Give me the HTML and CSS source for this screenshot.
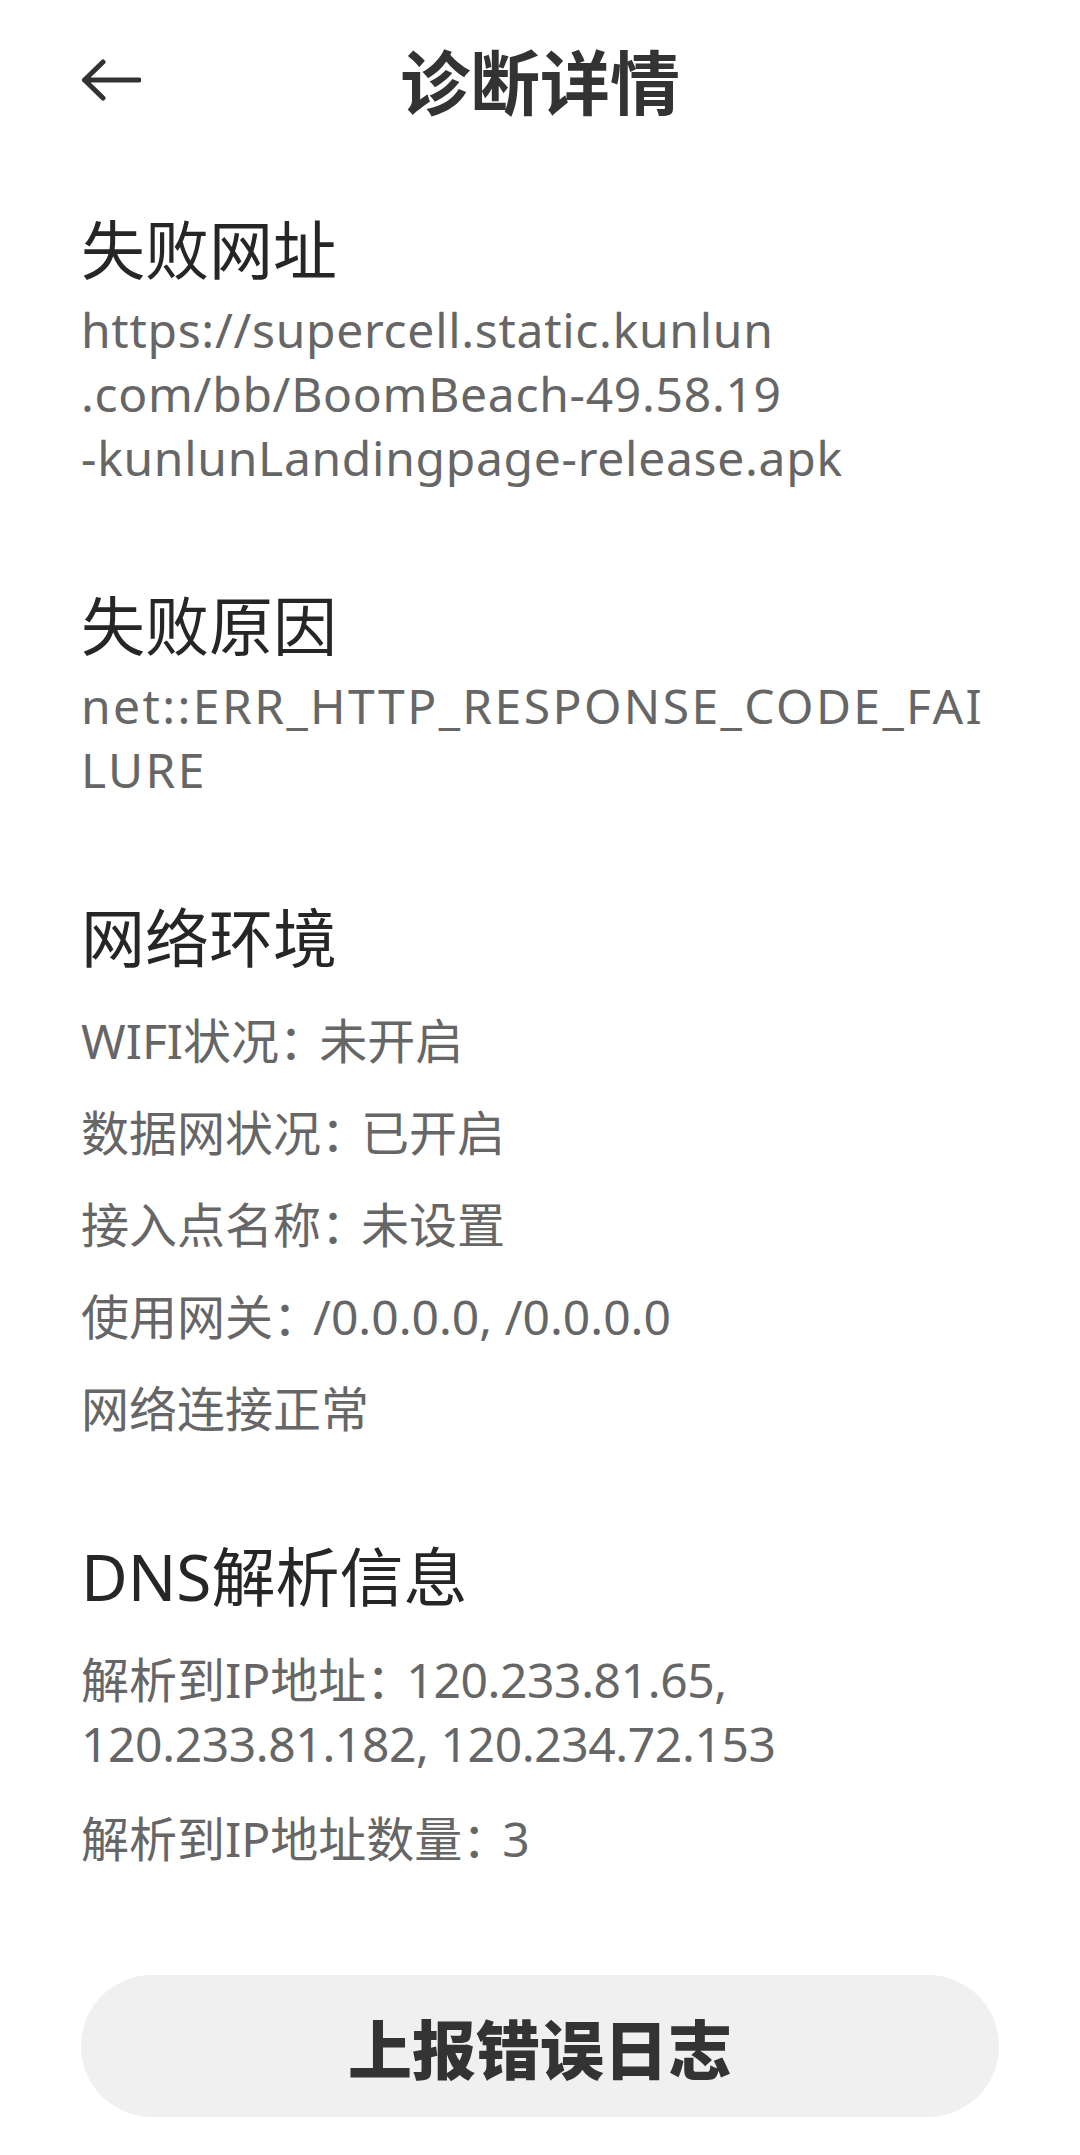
FILE: index.html
```html
<!DOCTYPE html>
<html lang="zh-CN">
<head>
<meta charset="utf-8">
<title>诊断详情</title>
<link rel="stylesheet" href="styles.css">
</head>
<body>
<div class="page">
  <header class="topbar">
    <button class="back" aria-label="返回">
      <svg class="back-icon" viewBox="0 0 60 44" width="60" height="44">
        <path d="M3.5 22 H58 M22 4 L3.5 22 L22 40" fill="none" stroke="#333" stroke-width="5" stroke-linecap="round" stroke-linejoin="round"/>
      </svg>
    </button>
    <h1 class="title">诊断详情</h1>
    <span class="spacer"></span>
  </header>

  <main class="content">
    <section class="section">
      <h2 class="heading">失败网址</h2>
      <p class="text url">
        <span class="line">https://supercell.static.kunlun</span>
        <span class="line">.com/bb/BoomBeach-49.58.19</span>
        <span class="line">-kunlunLandingpage-release.apk</span>
      </p>
    </section>

    <section class="section">
      <h2 class="heading">失败原因</h2>
      <p class="text caps">
        <span class="line">net::ERR_HTTP_RESPONSE_CODE_FAI</span>
        <span class="line">LURE</span>
      </p>
    </section>

    <section class="section">
      <h2 class="heading">网络环境</h2>
      <ul class="items">
        <li class="item">WIFI状况<span class="sep">：</span>未开启</li>
        <li class="item">数据网状况<span class="sep">：</span>已开启</li>
        <li class="item">接入点名称<span class="sep">：</span>未设置</li>
        <li class="item">使用网关<span class="sep">：</span>/0.0.0.0, /0.0.0.0</li>
        <li class="item">网络连接正常</li>
      </ul>
    </section>

    <section class="section">
      <h2 class="heading">DNS解析信息</h2>
      <ul class="items">
        <li class="item">
          <span class="line">解析到IP地址<span class="sep">：</span><span class="num">120.233.81.65,</span></span>
          <span class="line num">120.233.81.182, 120.234.72.153</span>
        </li>
        <li class="item item-count">解析到IP地址数量<span class="sep">：</span>3</li>
      </ul>
    </section>
  </main>

  <div class="actions">
    <button class="report">上报错误日志</button>
  </div>
</div>
</body>
</html>
```

FILE: styles.css
```css
* {
  box-sizing: border-box;
}

html, body {
  margin: 0;
  padding: 0;
  background: #ffffff;
}

body {
  font-family: "Noto Sans", "Noto Sans CJK SC", sans-serif;
  color: #333333;
}

.page {
  padding: 0 81px;
}

.topbar {
  display: grid;
  grid-template-columns: 1fr auto 1fr;
  align-items: center;
  height: 160px;
}

.back {
  justify-self: start;
  display: flex;
  align-items: center;
  padding: 0;
  margin: 0;
  border: none;
  background: none;
  cursor: pointer;
}

.back-icon {
  display: block;
}

.title {
  margin: 0;
  font-family: "Noto Sans CJK SC", sans-serif;
  font-size: 70px;
  line-height: 1;
  font-weight: 700;
  color: #333333;
}

.content {
  padding-top: 50px;
}

.section + .section {
  margin-top: 96px;
}

.heading {
  margin: 0;
  font-size: 64px;
  line-height: 80px;
  font-weight: 400;
  color: #262626;
}

.text {
  margin: 8px 0 0;
  font-size: 48px;
  line-height: 64px;
  color: #666666;
}

.url {
  letter-spacing: 0.7px;
}

.caps {
  letter-spacing: 2.4px;
}

.line {
  display: block;
  white-space: nowrap;
}

.num {
  letter-spacing: -0.4px;
}

.sep {
  letter-spacing: -8px;
  margin-right: 0;
}

.items {
  list-style: none;
  margin: 0;
  padding: 3px 0 0;
}

.item {
  margin-top: 28px;
  font-size: 48px;
  line-height: 64px;
  color: #666666;
}

.item-count {
  margin-top: 31px;
}

.actions {
  margin-top: 104px;
}

.report {
  display: block;
  width: 100%;
  height: 142px;
  border: none;
  border-radius: 71px;
  background: #f0f0f0;
  font-family: "Noto Sans CJK SC", sans-serif;
  font-size: 64px;
  font-weight: 900;
  color: #333333;
  cursor: pointer;
}
```
